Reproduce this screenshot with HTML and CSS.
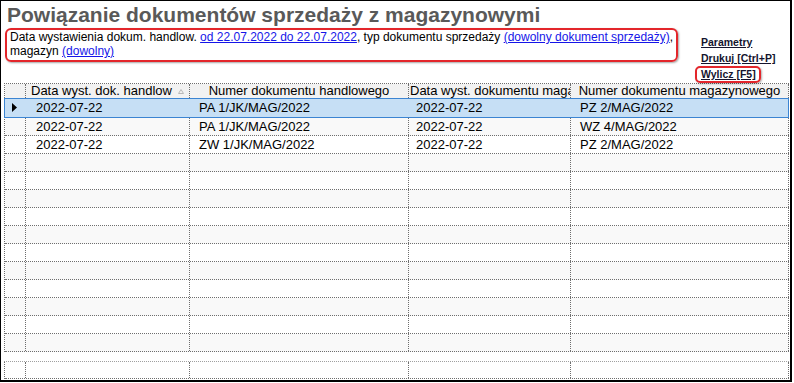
FILE: index.html
```html
<!DOCTYPE html>
<html lang="pl">
<head>
    <meta charset="UTF-8">
    <title>Powiązanie dokumentów sprzedaży z magazynowymi</title>
    <link rel="stylesheet" href="styles.css">
</head>
<body>
    <div class="window">
        <h1 class="title">Powiązanie dokumentów sprzedaży z magazynowymi</h1>

        <div class="top">
            <div class="filter">
                Data wystawienia dokum. handlow. <a href="#">od 22.07.2022 do 22.07.2022</a>, typ dokumentu sprzedaży <a href="#">(dowolny dokument sprzedaży)</a>,<br>
                magazyn <a href="#">(dowolny)</a>
            </div>
            <div class="actions">
                <a href="#" class="action">Parametry</a>
                <a href="#" class="action">Drukuj [Ctrl+P]</a>
                <a href="#" class="action hot">Wylicz [F5]</a>
            </div>
        </div>

        <div class="grid">
            <div class="row head">
                <div class="cell"></div>
                <div class="cell sort">
                    <span>Data wyst. dok. handlow</span>
                    <svg class="sort-arrow" width="6" height="5" viewBox="0 0 6 5"><polygon points="0.5,4.5 3,0.5 5.5,4.5" fill="none" stroke="#b8b8b8" stroke-width="1"/></svg>
                </div>
                <div class="cell center">Numer dokumentu handlowego</div>
                <div class="cell clip">Data wyst. dokumentu magazynowego</div>
                <div class="cell center">Numer dokumentu magazynowego</div>
            </div>

            <div class="row sel">
                <div class="cell ind">
                    <svg width="6" height="10" viewBox="0 0 6 10"><polygon points="0,0 5,4.5 0,9" fill="#000"/></svg>
                </div>
                <div class="cell c1">2022-07-22</div>
                <div class="cell c2">PA 1/JK/MAG/2022</div>
                <div class="cell c3">2022-07-22</div>
                <div class="cell c4">PZ 2/MAG/2022</div>
            </div>
            <div class="row alt">
                <div class="cell"></div>
                <div class="cell c1">2022-07-22</div>
                <div class="cell c2">PA 1/JK/MAG/2022</div>
                <div class="cell c3">2022-07-22</div>
                <div class="cell c4">WZ 4/MAG/2022</div>
            </div>
            <div class="row">
                <div class="cell"></div>
                <div class="cell c1">2022-07-22</div>
                <div class="cell c2">ZW 1/JK/MAG/2022</div>
                <div class="cell c3">2022-07-22</div>
                <div class="cell c4">PZ 2/MAG/2022</div>
            </div>
            <div class="row alt"><div class="cell"></div><div class="cell"></div><div class="cell"></div><div class="cell"></div><div class="cell"></div></div>
            <div class="row"><div class="cell"></div><div class="cell"></div><div class="cell"></div><div class="cell"></div><div class="cell"></div></div>
            <div class="row alt"><div class="cell"></div><div class="cell"></div><div class="cell"></div><div class="cell"></div><div class="cell"></div></div>
            <div class="row"><div class="cell"></div><div class="cell"></div><div class="cell"></div><div class="cell"></div><div class="cell"></div></div>
            <div class="row alt"><div class="cell"></div><div class="cell"></div><div class="cell"></div><div class="cell"></div><div class="cell"></div></div>
            <div class="row"><div class="cell"></div><div class="cell"></div><div class="cell"></div><div class="cell"></div><div class="cell"></div></div>
            <div class="row alt"><div class="cell"></div><div class="cell"></div><div class="cell"></div><div class="cell"></div><div class="cell"></div></div>
            <div class="row"><div class="cell"></div><div class="cell"></div><div class="cell"></div><div class="cell"></div><div class="cell"></div></div>
            <div class="row alt"><div class="cell"></div><div class="cell"></div><div class="cell"></div><div class="cell"></div><div class="cell"></div></div>
            <div class="row"><div class="cell"></div><div class="cell"></div><div class="cell"></div><div class="cell"></div><div class="cell"></div></div>
            <div class="row alt"><div class="cell"></div><div class="cell"></div><div class="cell"></div><div class="cell"></div><div class="cell"></div></div>
        </div>

        <div class="grid footer">
            <div class="row"><div class="cell"></div><div class="cell"></div><div class="cell"></div><div class="cell"></div><div class="cell"></div></div>
        </div>
    </div>
</body>
</html>
```

FILE: styles.css
```css
* {
    box-sizing: border-box;
}

body {
    margin: 0;
    background: #fff;
    font-family: "Liberation Sans", Arial, sans-serif;
    color: #000;
}

.window {
    width: 792px;
    height: 382px;
    border: solid #000;
    border-width: 1px 2px 2px 1px;
    overflow: hidden;
}

.title {
    margin: 1px 0 0 6px;
    height: 26px;
    font-size: 21px;
    line-height: 26px;
    font-weight: bold;
    color: #595959;
    white-space: nowrap;
}

.top {
    display: flex;
    height: 55px;
}

.filter {
    width: 673px;
    height: 34px;
    margin-left: 4px;
    padding: 0 3px;
    border: 2px solid #e3262b;
    border-radius: 6px;
    box-shadow: 1px 1px 2px rgba(0, 0, 0, 0.35);
    font-size: 12px;
    line-height: 14px;
    white-space: nowrap;
}

.filter a {
    color: #1515e8;
}

.actions {
    margin-left: 17px;
    padding-top: 6px;
    display: flex;
    flex-direction: column;
    align-items: flex-start;
}

.action {
    display: block;
    height: 16px;
    padding: 0 3px 0 4px;
    border: 2px solid transparent;
    border-radius: 5px;
    font-size: 10.5px;
    line-height: 12px;
    font-weight: bold;
    color: #14142e;
    white-space: nowrap;
}

.action.hot {
    height: 17px;
    border-color: #e3262b;
    box-shadow: 1px 1px 2px rgba(0, 0, 0, 0.3);
}

.grid {
    width: 785px;
    margin-left: 3px;
    border-left: 1px dotted #6e6e6e;
    border-top: 1px dotted #6e6e6e;
    font-size: 13px;
}

.row {
    display: grid;
    grid-template-columns: 21px 164px 219px 162px 218px;
    height: 18px;
    line-height: 17px;
    border-bottom: 1px dotted #6e6e6e;
    background: #fff;
}

.row.alt {
    background: #f9f9f9;
}

.cell {
    border-right: 1px dotted #6e6e6e;
    white-space: nowrap;
    overflow: hidden;
}

.row.head {
    height: 15px;
    line-height: 14px;
    background: #f2f2f2;
}

.head .center {
    text-align: center;
}

.head .clip {
    padding-left: 1px;
}

.sort {
    display: flex;
    align-items: center;
    padding: 0 5px;
}

.sort-arrow {
    margin-left: auto;
}

.row.sel {
    position: relative;
    height: 19px;
    line-height: 18px;
    background: #c6dff5;
}

.row.sel::after {
    content: "";
    position: absolute;
    left: -1px;
    right: 0;
    top: -1px;
    bottom: -1px;
    border: 1px solid #3b84d2;
}

.row.sel .cell {
    border-right-color: transparent;
}

.ind {
    display: flex;
    align-items: center;
    padding-left: 7px;
}

.c1 {
    padding-left: 10px;
}

.c2 {
    padding-left: 9px;
}

.c3 {
    padding-left: 7px;
}

.c4 {
    padding-left: 9px;
}

.footer {
    margin-top: 9px;
    border-top-color: #a0a0a0;
}

.footer .row {
    height: 17px;
}
```
